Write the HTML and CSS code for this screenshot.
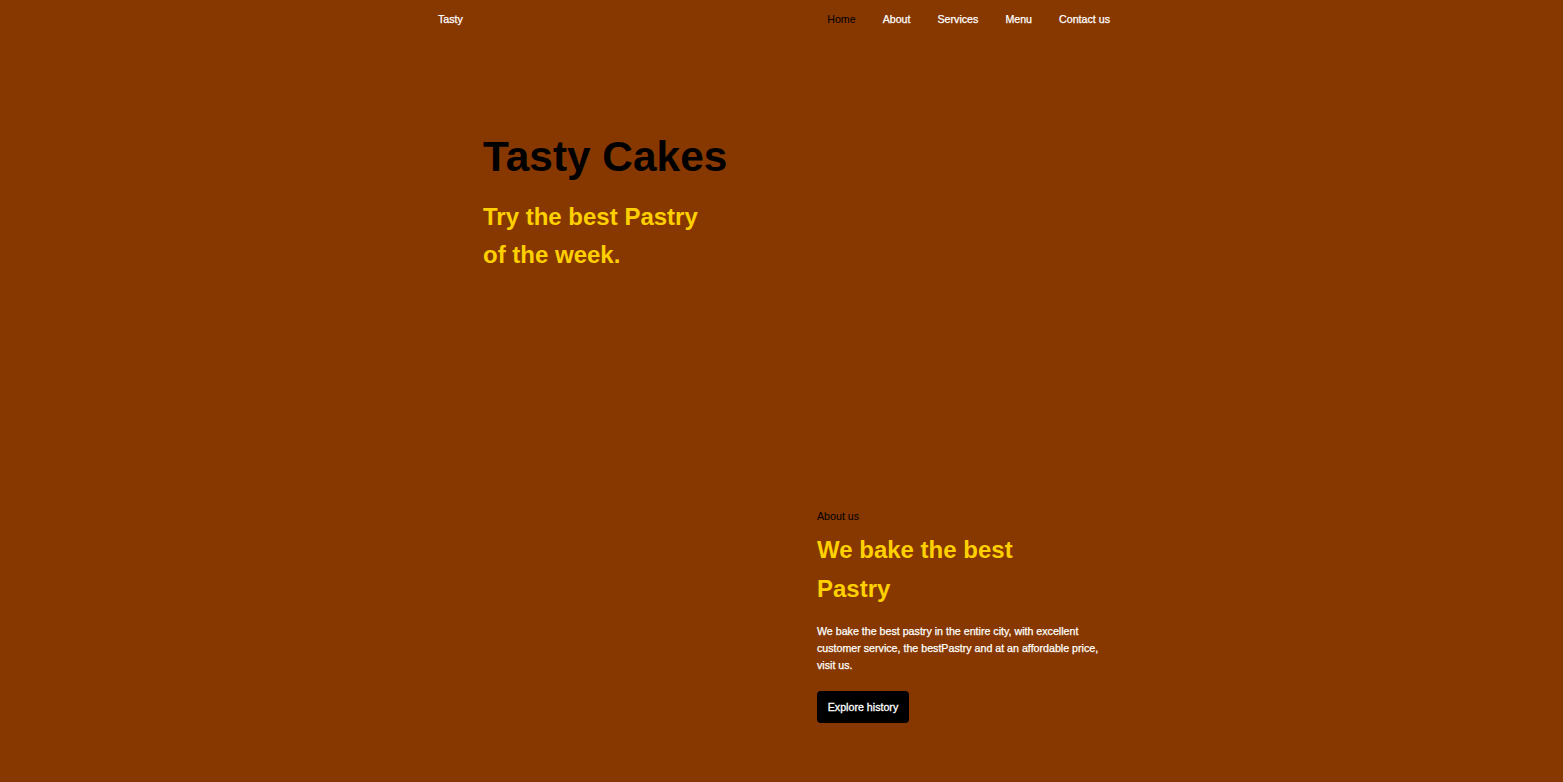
FILE: index.html
```html
<!DOCTYPE html>
<html lang="en">
<head>
<meta charset="utf-8">
<title>Tasty</title>
<link rel="stylesheet" href="styles.css">
</head>
<body>
<div class="page">
  <header class="header">
    <a class="logo" href="#">Tasty</a>
    <nav class="nav">
      <a class="nav-link active" href="#">Home</a>
      <a class="nav-link" href="#">About</a>
      <a class="nav-link" href="#">Services</a>
      <a class="nav-link" href="#">Menu</a>
      <a class="nav-link" href="#">Contact us</a>
    </nav>
  </header>
  <section class="hero">
    <h1 class="hero-title">Tasty Cakes</h1>
    <h2 class="hero-sub">Try the best Pastry<br>of the week.</h2>
  </section>
  <section class="about">
    <div class="about-media"></div>
    <div class="about-text">
      <p class="about-label">About us</p>
      <h2 class="about-title">We bake the best Pastry</h2>
      <p class="about-desc">We bake the best pastry in the entire city, with excellent customer service, the bestPastry and at an affordable price, visit us.</p>
      <a class="btn" href="#">Explore history</a>
    </div>
  </section>
</div>
</body>
</html>
```
FILE: styles.css
```css
* { box-sizing: border-box; }
html, body { margin: 0; padding: 0; }
body {
  background: #873800;
  font-family: "Liberation Sans", Arial, sans-serif;
  color: #fff;
  min-height: 782px;
}
a { text-decoration: none; }
.page {
  width: 672px;
  margin: 0 0 0 438px;
}
.header {
  display: flex;
  justify-content: space-between;
  align-items: center;
  padding: 12px 0;
  height: 38px;
}
.logo {
  color: #fff;
  font-size: 10.67px;
  line-height: 14px;
  -webkit-text-stroke: 0.25px #fff;
}
.nav {
  display: flex;
  gap: 27px;
}
.nav-link {
  color: #fff;
  font-size: 10.67px;
  line-height: 14px;
  -webkit-text-stroke: 0.25px #fff;
}
.nav-link.active {
  color: #000;
  -webkit-text-stroke: 0;
}
.hero {
  padding: 94px 0 0 45px;
  height: 471px;
}
.hero-title {
  margin: 0;
  color: #000;
  font-size: 42.4px;
  line-height: 50px;
  font-weight: 700;
}
.hero-sub {
  margin: 16px 0 0;
  color: #ffd000;
  font-size: 24px;
  line-height: 38px;
  font-weight: 700;
}
.about {
  display: grid;
  grid-template-columns: 379px 1fr;
}
.about-text {
  display: flex;
  flex-direction: column;
  align-items: flex-start;
}
.about-label {
  margin: 0;
  color: #000;
  font-size: 10.67px;
  line-height: 14px;
}
.about-title {
  margin: 7px 0 0;
  width: 250px;
  color: #ffd000;
  font-size: 24px;
  line-height: 39px;
  font-weight: 700;
}
.about-desc {
  margin: 15px 0 0;
  width: 290px;
  font-size: 10.67px;
  line-height: 17px;
  color: #fff;
  -webkit-text-stroke: 0.25px #fff;
}
.btn {
  margin-top: 17px;
  display: inline-flex;
  align-items: center;
  justify-content: center;
  width: 92px;
  height: 32px;
  background: #000;
  color: #fff;
  border-radius: 4px;
  font-size: 10.67px;
  -webkit-text-stroke: 0.3px #fff;
}
```
